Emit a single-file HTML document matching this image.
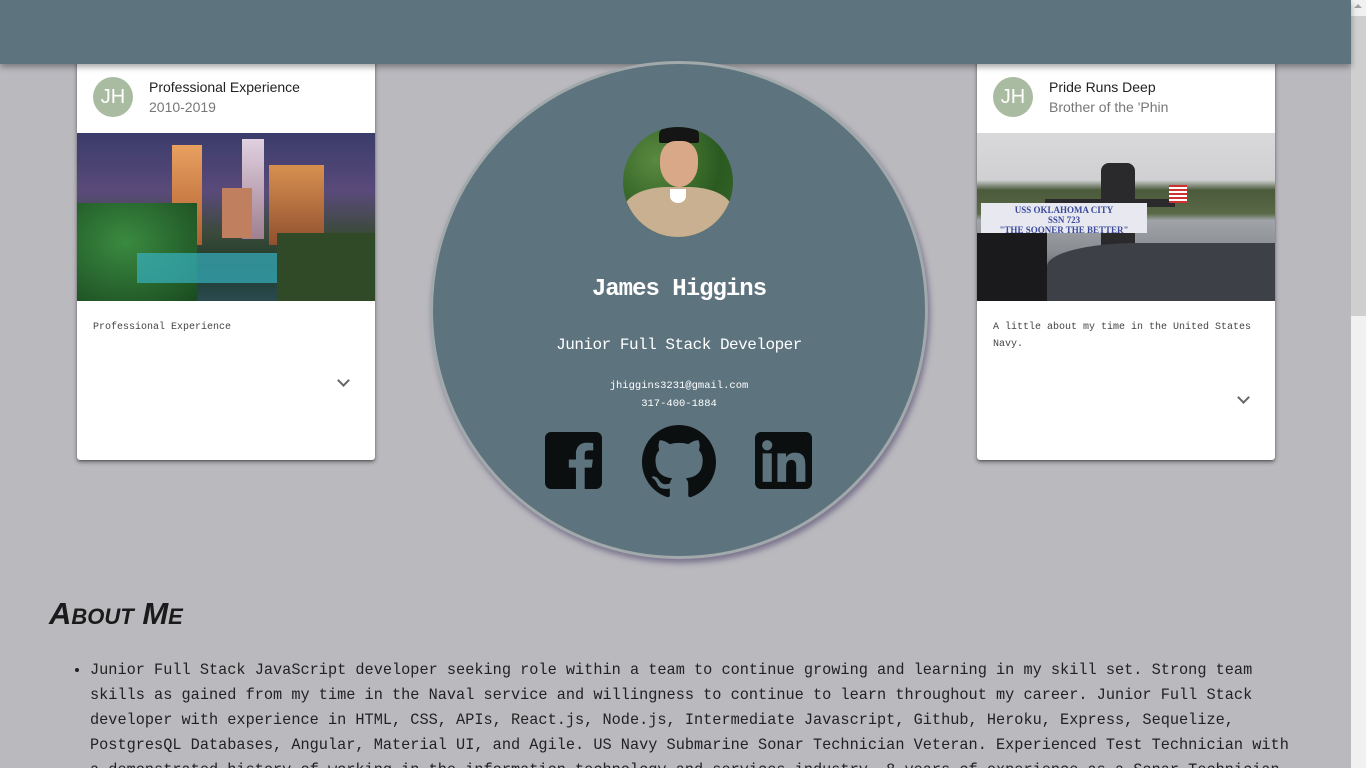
<!DOCTYPE html>
<html><head><meta charset="utf-8">
<style>
*{box-sizing:border-box;margin:0;padding:0}
html,body{width:1366px;height:768px;overflow:hidden}
body{background:#bab9be;font-family:"Liberation Sans",sans-serif;position:relative}
.hdr{position:absolute;left:0;top:0;width:1351px;height:64px;background:#5d737e;box-shadow:0 3px 6px rgba(0,0,0,.35);z-index:5}
.sb{position:absolute;left:1351px;top:0;width:15px;height:768px;background:#f1f1f1}
.thumb{position:absolute;left:1351px;top:16px;width:15px;height:300px;background:#cfcfcf}
.arr{position:absolute;left:1354px;top:4px;width:0;height:0;border-left:4px solid transparent;border-right:4px solid transparent;border-bottom:4px solid #a3a3a3}
.card{position:absolute;top:40px;width:298px;height:420px;background:#fff;border-radius:3px;box-shadow:0 2px 4px rgba(0,0,0,.45),0 1px 1px rgba(0,0,0,.2)}
.av{position:absolute;left:16px;top:37px;width:40px;height:40px;border-radius:50%;background:#a9bba0;color:#fff;font-size:20px;line-height:40px;text-align:center}
.t1{position:absolute;left:72px;top:39px;font-size:14px;color:#222}
.t2{position:absolute;left:72px;top:59px;font-size:14px;color:#777}
.img{position:absolute;left:0;top:93px;width:298px;height:168px;overflow:hidden}
.desc{position:absolute;left:16px;top:279px;width:275px;font-family:"Liberation Mono",monospace;font-size:10px;line-height:17px;color:#444}
.chev{position:absolute;width:9px;height:9px;border-right:2px solid #666;border-bottom:2px solid #666;transform:rotate(45deg)}
.circle{position:absolute;left:430px;top:61px;width:498px;height:498px;border-radius:50%;background:#5d737e;border:3px solid #a2a9ab;box-shadow:2px 4px 6px rgba(80,70,110,.6);z-index:6}
.ctext{position:absolute;width:100%;text-align:center;color:#fff;font-family:"Liberation Mono",monospace}
h2{position:absolute;left:49px;top:596px;font-size:31px;font-family:"Liberation Sans",sans-serif;font-weight:900;font-style:italic;font-variant:small-caps;color:#1a1a1a}
ul{position:absolute;left:90px;top:658px;width:1205px;font-family:"Liberation Mono",monospace;font-size:15.25px;line-height:25px;color:#222}
li{list-style:disc}
</style></head><body>
<div class="hdr"></div>
<div class="sb"></div><div class="thumb"></div><div class="arr"></div>

<div class="card" style="left:77px">
 <div class="av">JH</div>
 <div class="t1">Professional Experience</div>
 <div class="t2">2010-2019</div>
 <div class="img" style="background:linear-gradient(180deg,#3a3c6a 0%,#5a4a7a 35%,#3b4a3a 60%,#1d3a2a 80%,#2a4a50 100%)">
  <div style="position:absolute;left:95px;top:12px;width:30px;height:100px;background:linear-gradient(#e8a060,#b06030)"></div>
  <div style="position:absolute;left:165px;top:6px;width:22px;height:100px;background:linear-gradient(#e0d0e0,#a08090)"></div>
  <div style="position:absolute;left:192px;top:32px;width:55px;height:80px;background:linear-gradient(#d89050,#905030)"></div>
  <div style="position:absolute;left:145px;top:55px;width:30px;height:50px;background:#c08060"></div>
  <div style="position:absolute;left:0;top:70px;width:120px;height:98px;background:radial-gradient(ellipse at 40% 40%,#3a8a40,#1a4a20)"></div>
  <div style="position:absolute;left:60px;top:120px;width:150px;height:30px;background:#38b0c0;opacity:.7"></div>
  <div style="position:absolute;left:200px;top:100px;width:98px;height:68px;background:#304a28"></div>
 </div>
 <div class="desc">Professional Experience</div>
 <div class="chev" style="left:262px;top:336px"></div>
</div>

<div class="card" style="left:977px">
 <div class="av">JH</div>
 <div class="t1">Pride Runs Deep</div>
 <div class="t2">Brother of the 'Phin</div>
 <div class="img" style="background:linear-gradient(180deg,#d9d9db 0%,#d0d0d2 28%,#4a5a3a 34%,#5a6a48 48%,#a0a4a8 52%,#8a8e92 70%,#3a3d42 100%)">
  <div style="position:absolute;left:124px;top:30px;width:34px;height:100px;background:#2a2a2c;border-radius:8px 8px 0 0"></div>
  <div style="position:absolute;left:68px;top:66px;width:130px;height:8px;background:#2a2a2c"></div>
  <div style="position:absolute;left:4px;top:70px;width:166px;height:30px;background:#e8e8f0;font-family:'Liberation Serif',serif;font-size:9px;color:#3a4a9a;text-align:center;font-weight:bold;line-height:10px;padding-top:2px">USS OKLAHOMA CITY<br>SSN 723<br>"THE SOONER THE BETTER"</div>
  <div style="position:absolute;left:0;top:100px;width:70px;height:68px;background:#1a1a1c"></div>
  <div style="position:absolute;left:70px;top:110px;width:228px;height:58px;background:#3d4046;border-radius:40% 0 0 0"></div>
  <div style="position:absolute;left:192px;top:52px;width:18px;height:18px;background:repeating-linear-gradient(#d03030 0 2px,#fff 2px 4px)"></div>
 </div>
 <div class="desc">A little about my time in the United States Navy.</div>
 <div class="chev" style="left:262px;top:353px"></div>
</div>

<div class="circle">
 <div style="position:absolute;left:190px;top:63px;width:110px;height:110px;border-radius:50%;overflow:hidden;background:radial-gradient(circle at 30% 30%,#5a8a40,#2a5a20 60%,#3a6a30)">
  <div style="position:absolute;left:36px;top:0;width:40px;height:16px;background:#151515;border-radius:8px 8px 2px 2px"></div>
  <div style="position:absolute;left:37px;top:14px;width:38px;height:46px;background:#d8a888;border-radius:40% 40% 50% 50%"></div>
  <div style="position:absolute;left:0;top:60px;width:110px;height:60px;background:#c8b090;border-radius:40% 40% 0 0"></div>
  <div style="position:absolute;left:47px;top:62px;width:16px;height:14px;background:#fff;border-radius:0 0 50% 50%"></div>
 </div>
 <div class="ctext" style="top:212px;font-size:24px;font-weight:bold;letter-spacing:-1px">James Higgins</div>
 <div class="ctext" style="top:272px;font-size:16px;letter-spacing:-.5px">Junior Full Stack Developer</div>
 <div class="ctext" style="top:316px;font-size:10.5px">jhiggins3231@gmail.com</div>
 <div class="ctext" style="top:334px;font-size:10.5px">317-400-1884</div>
 <svg style="position:absolute;left:112px;top:368px" width="57" height="57" viewBox="0 0 56 56"><rect width="56" height="56" rx="6" fill="#0b0f10"/><path d="M39 56V35h7l1-8h-8v-5c0-2.3.7-4 4-4h4.4v-7.2c-.8-.1-3.4-.3-6.4-.3-6.3 0-10.6 3.8-10.6 10.9V27h-7v8h7v21z" fill="#5d737e"/></svg>
 <svg style="position:absolute;left:208px;top:361px" width="76" height="74" viewBox="0 0 16 16"><path fill="#0b0f10" d="M8 0C3.58 0 0 3.580 0 8c0 3.54 2.29 6.53 5.47 7.590.4.07.55-.17.55-.38 0-.19-.01-.82-.01-1.49-2.01.37-2.53-.49-2.690-.94-.09-.23-.48-.94-.82-1.13-.28-.15-.68-.52-.01-.53.63-.01 1.080.58 1.230.82.72 1.21 1.870.87 2.330.66.07-.52.28-.87.51-1.07-1.78-.2-3.64-.89-3.64-3.95 0-.87.31-1.59.82-2.15-.08-.2-.36-1.02.08-2.12 0 0 .67-.21 2.2.82.64-.18 1.32-.27 2-.27.68 0 1.36.09 2 .27 1.53-1.04 2.2-.82 2.2-.82.44 1.1.16 1.92.08 2.12.51.56.82 1.27.82 2.15 0 3.07-1.87 3.75-3.65 3.95.29.25.54.73.54 1.48 0 1.07-.01 1.93-.01 2.2 0 .21.15.46.55.38A8.013 8.013 0 0016 8c0-4.42-3.58-8-8-8z"/></svg>
 <svg style="position:absolute;left:322px;top:368px" width="57" height="57" viewBox="0 0 56 56"><rect width="56" height="56" rx="6" fill="#0b0f10"/><circle cx="12" cy="13" r="5" fill="#5d737e"/><rect x="7.5" y="21" width="9" height="28" fill="#5d737e"/><path d="M22 21h8.5v4c1.3-2.4 4.3-4.7 8.6-4.7 8.8 0 10.4 5.4 10.4 12.6V49h-9V35c0-3.3-.1-7.6-4.6-7.600-4.6 0-5.3 3.6-5.3 7.3V49H22z" fill="#5d737e"/></svg>
</div>

<h2>About Me</h2>
<ul><li>Junior Full Stack JavaScript developer seeking role within a team to continue growing and learning in my skill set. Strong team skills as gained from my time in the Naval service and willingness to continue to learn throughout my career. Junior Full Stack developer with experience in HTML, CSS, APIs, React.js, Node.js, Intermediate Javascript, Github, Heroku, Express, Sequelize, PostgresQL Databases, Angular, Material UI, and Agile. US Navy Submarine Sonar Technician Veteran. Experienced Test Technician with a demonstrated history of working in the information technology and services industry. 8 years of experience as a Sonar Technician.</li></ul>
</body></html>
